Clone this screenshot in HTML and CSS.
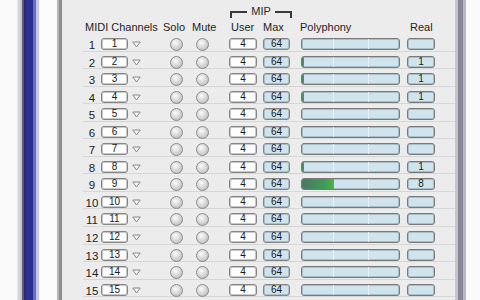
FILE: index.html
```html
<!DOCTYPE html>
<html>
<head>
<meta charset="utf-8">
<link rel="stylesheet" href="styles.css">
</head>
<body>
<div class="screen">
  <div class="frame-left">
    <div class="fl-white"></div>
    <div class="fl-gray"></div>
    <div class="fl-dark"></div>
    <div class="fl-navy"></div>
    <div class="fl-blue"></div>
    <div class="fl-lav"></div>
    <div class="fl-white2"></div>
    <div class="fl-edge1"></div>
    <div class="fl-edge2"></div>
  </div>
  <div class="panel">
    <div class="mip-row">
      <div class="mip">
        <span class="mip-l"></span>
        <span class="mip-t">MIP</span>
        <span class="mip-r"></span>
      </div>
    </div>
    <div class="head">
      <span class="h-midi">MIDI Channels</span>
      <span class="h-solo">Solo</span>
      <span class="h-mute">Mute</span>
      <span class="h-user">User</span>
      <span class="h-max">Max</span>
      <span class="h-poly">Polyphony</span>
      <span class="h-real">Real</span>
    </div>
    <div class="rows" id="rows"></div>
  </div>
  <div class="frame-right">
    <div class="fr-a"></div>
    <div class="fr-b"></div>
    <div class="fr-c"></div>
    <div class="fr-white"></div>
  </div>
</div>
<script>
var real = {2:"1",3:"1",4:"1",8:"1",9:"8"};
var level = {2:2,3:2,4:2,8:2,9:32};
var html = "";
for (var i = 1; i <= 15; i++) {
  var lv = level[i] ? '<div class="level" style="width:' + level[i] + 'px"></div>' : '';
  html += '<div class="row">' +
    '<span class="num">' + i + '</span>' +
    '<span class="box chan">' + i + '</span>' +
    '<svg class="tri" width="9" height="7" viewBox="0 0 9 7"><path d="M0.8 1 H8.2 L4.5 6 Z" fill="#f6f6f6" stroke="#8a8a8a" stroke-width="1"/></svg>' +
    '<span class="led solo"></span>' +
    '<span class="led mute"></span>' +
    '<span class="box user">4</span>' +
    '<span class="box blue max">64</span>' +
    '<span class="box blue poly">' + lv + '<i class="div d1"></i><i class="div d2"></i></span>' +
    '<span class="box blue real">' + (real[i] || "") + '</span>' +
    '</div>';
}
document.getElementById("rows").innerHTML = html;
</script>
</body>
</html>
```

FILE: styles.css
```css
html, body {
  margin: 0;
  padding: 0;
  background: #fafafa;
}
.screen {
  display: flex;
  width: 480px;
  height: 300px;
  overflow: hidden;
  font-family: "Liberation Sans", Arial, sans-serif;
  color: #222;
}
.frame-left {
  display: flex;
  height: 300px;
}
.fl-white { width: 17px; background: #fafafa; }
.fl-gray { width: 5px; background: linear-gradient(to right, #e4e4e4, #c4c4c4); }
.fl-dark { width: 2px; background: #5c5c6a; }
.fl-navy { width: 9px; background: linear-gradient(to right, #23257a, #2e3194 40%, #2a2d8c); }
.fl-blue { width: 3px; background: #6a6fc4; }
.fl-lav { width: 3px; background: #c6c9ec; }
.fl-white2 { width: 18px; background: #fcfcfc; }
.fl-edge1 { width: 2px; background: #b8b8b8; }
.fl-edge2 { width: 3px; background: #8e8e8e; }
.panel {
  width: 393px;
  height: 300px;
  background: #ececec;
  padding-left: 21px;
  box-sizing: border-box;
}
.frame-right {
  display: flex;
  height: 300px;
}
.fr-a { width: 3px; background: #c6c6c8; }
.fr-b { width: 5px; background: #8a8898; }
.fr-c { width: 3px; background: #b8b8c2; }
.fr-white { width: 14px; background: #fafafa; }

/* MIP bracket */
.mip-row {
  height: 20px;
  padding-left: 147px;
  box-sizing: border-box;
  padding-top: 11px;
}
.mip {
  display: flex;
  width: 62px;
  align-items: flex-start;
}
.mip-l, .mip-r {
  height: 5px;
  border-top: 2px solid #3a3a3a;
  flex: 1;
}
.mip-l { border-left: 2px solid #3a3a3a; }
.mip-r { border-right: 2px solid #3a3a3a; }
.mip-t {
  font-size: 11px;
  line-height: 11px;
  margin-top: -5px;
  padding: 0 4px;
  color: #2a2a2a;
}

/* header */
.head {
  height: 14px;
  display: flex;
  font-size: 11px;
  line-height: 14px;
  color: #242424;
}
.h-midi { margin-left: 2px; width: 78px; }
.h-solo { width: 29px; }
.h-mute { width: 39px; }
.h-user { width: 32px; }
.h-max { width: 37px; }
.h-poly { width: 110px; }

/* rows */
.row {
  display: flex;
  align-items: flex-start;
  height: 17.55px;
  box-sizing: border-box;
  padding-top: 5px;
  border-bottom: 1px solid #d6d6d6;
}
.num {
  width: 18px;
  text-align: center;
  font-size: 11.5px;
  line-height: 12px;
  color: #222;
}
.box {
  height: 12px;
  margin-top: -1px;
  box-sizing: border-box;
  border: 1px solid #858585;
  border-radius: 3px;
  box-shadow: inset 0 0 0 1px #c8c8c8;
  background: #fdfdfd;
  font-size: 10px;
  line-height: 10px;
  text-align: center;
  color: #1a1a1a;
}
.blue {
  background: #cfe4ed;
  box-shadow: inset 0 0 0 1px #a9bfc8;
}
.chan { width: 27px; }
.tri { margin-left: 4px; margin-top: 2px; }
.led {
  width: 13px;
  height: 13px;
  box-sizing: border-box;
  border-radius: 50%;
  border: 1px solid #8a8a8a;
  background: radial-gradient(circle at 40% 35%, #fbfbfb 0%, #dedede 40%, #b0b0b0 100%);
  margin-top: -1px;
}
.solo { margin-left: 29px; }
.mute { margin-left: 13px; }
.user { margin-left: 20px; width: 28px; }
.max { margin-left: 6px; width: 27px; }
.poly {
  margin-left: 11px;
  width: 99px;
  position: relative;
  overflow: hidden;
  border-color: #7a7a7a;
}
.real {
  margin-left: 7px;
  width: 28px;
  border-color: #7a7a7a;
}
.div {
  position: absolute;
  top: 0;
  bottom: 0;
  width: 1px;
  background: #e8f2f6;
}
.d1 { left: 31px; }
.d2 { left: 66px; }
.level {
  position: absolute;
  left: 0;
  top: 0;
  bottom: 0;
  background: linear-gradient(to right, #4a7868, #3f9a55 70%, #4cb548);
  z-index: 1;
}
```
